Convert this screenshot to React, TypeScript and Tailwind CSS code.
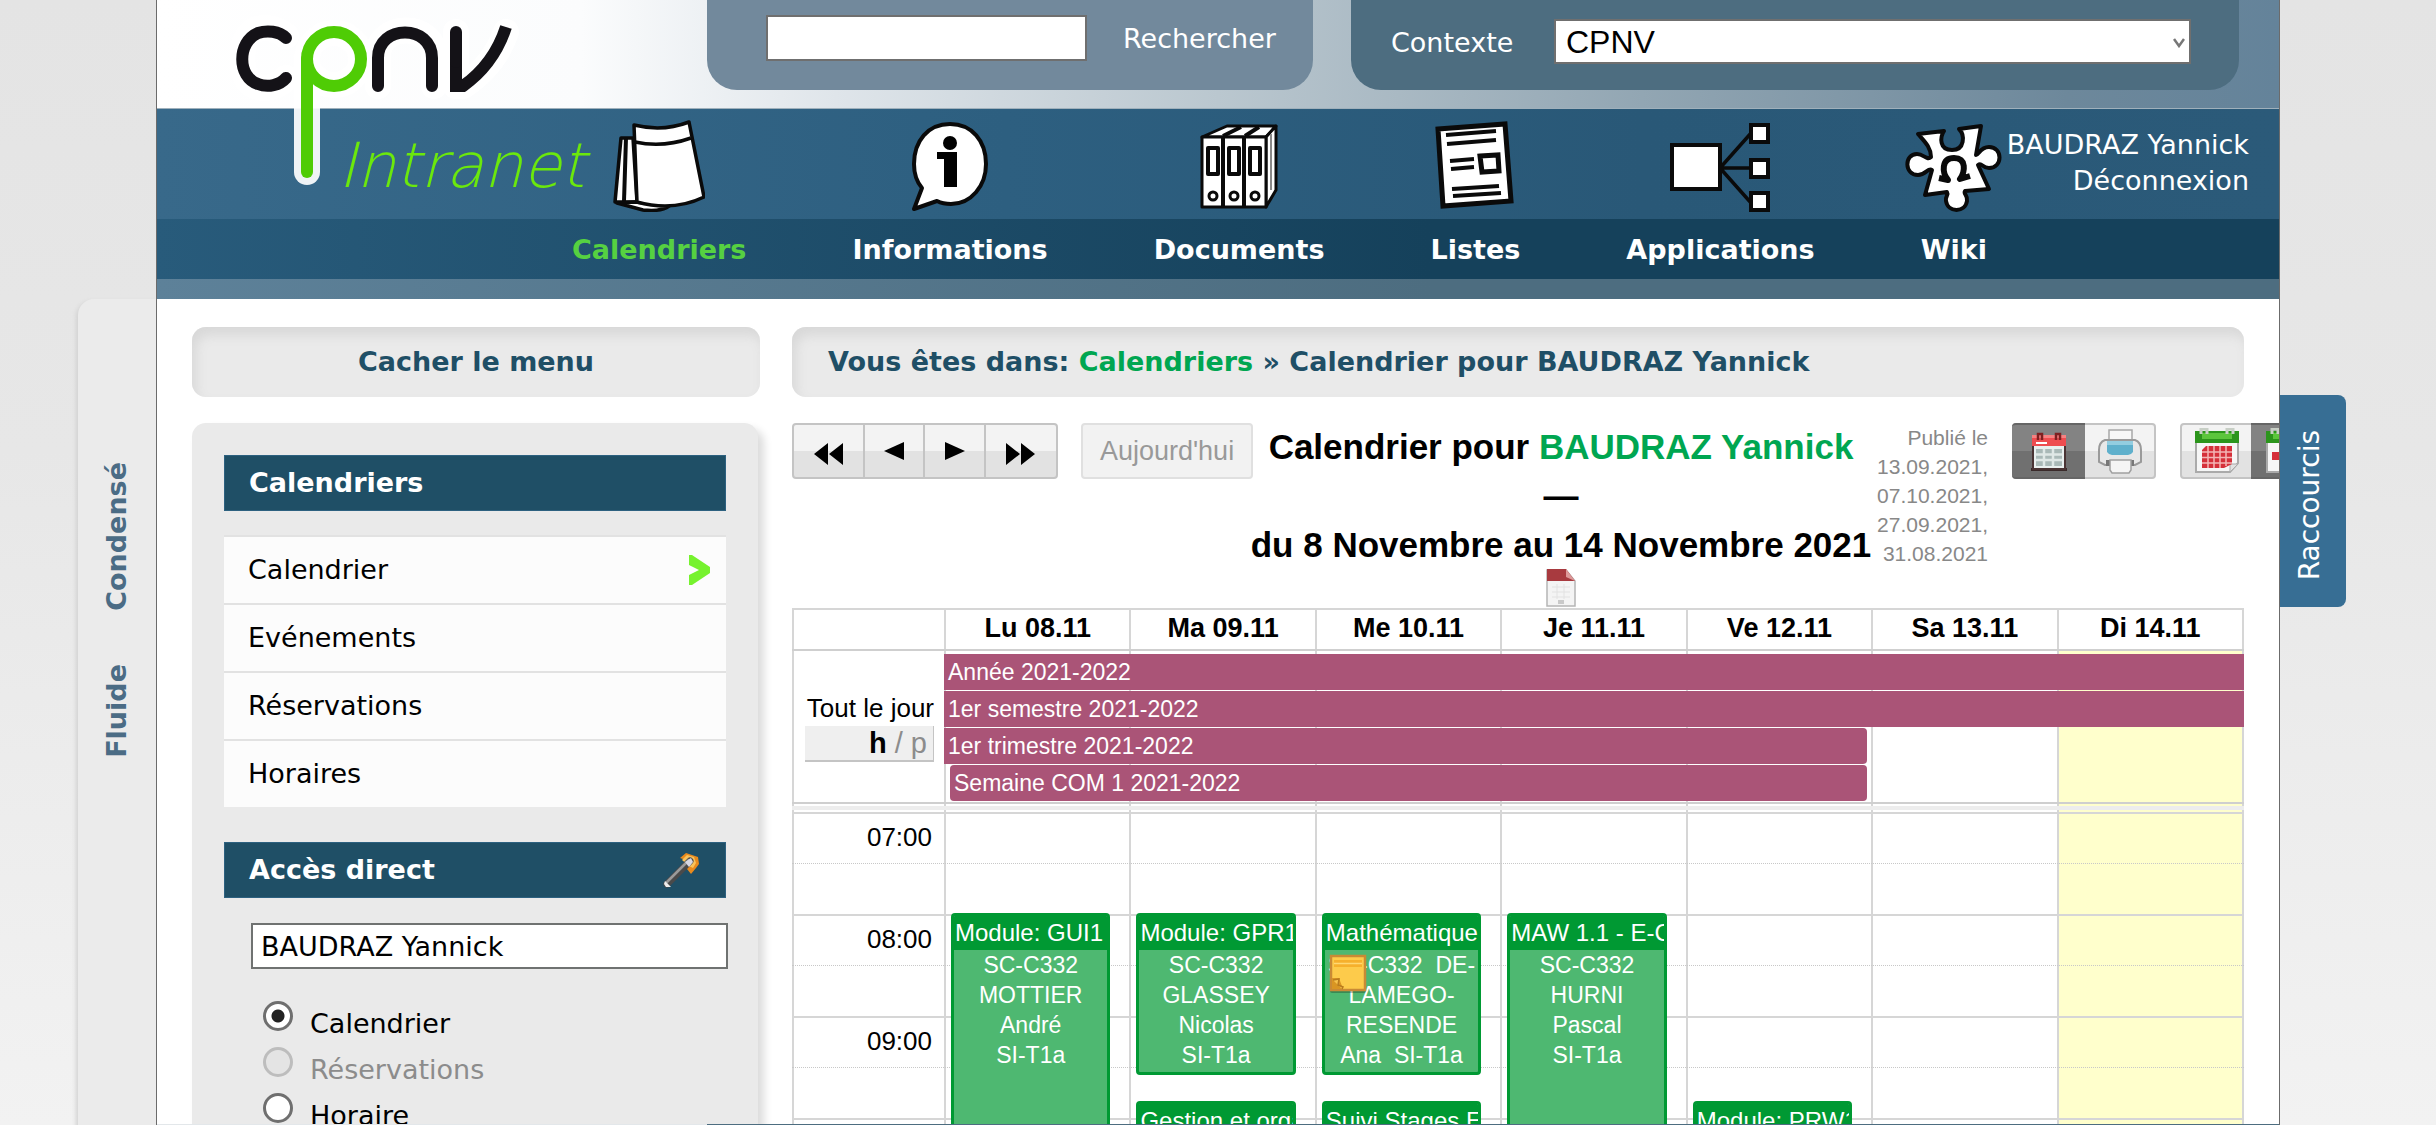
import React from "react";

const navItems = [
  { label: "Calendriers", icon: <CalendarPadIcon />, active: true },
  { label: "Informations", icon: <InfoBubbleIcon /> },
  { label: "Documents", icon: <BindersIcon /> },
  { label: "Listes", icon: <SheetIcon /> },
  { label: "Applications", icon: <TreeIcon /> },
  { label: "Wiki", icon: <PuzzleIcon /> },
];

const menuItems = ["Calendrier", "Evénements", "Réservations", "Horaires"];
const days = ["Lu 08.11", "Ma 09.11", "Me 10.11", "Je 11.11", "Ve 12.11", "Sa 13.11", "Di 14.11"];
const hours = ["07:00", "08:00", "09:00", "10:00"];
const publishedOn = ["Publié le", "13.09.2021,", "07.10.2021,", "27.09.2021,", "31.08.2021"];

type Lesson = { title: string; lines: string[]; height: string; note?: boolean };
const lessons: { offset: string; items: Lesson[] }[] = [
  { offset: "pt-[101px]", items: [{ title: "Module: GUI1", lines: ["SC-C332", "MOTTIER", "André", "SI-T1a"], height: "h-[320px]" }] },
  {
    offset: "pt-[101px]",
    items: [
      { title: "Module: GPR1", lines: ["SC-C332", "GLASSEY", "Nicolas", "SI-T1a"], height: "h-[162px]" },
      { title: "Gestion et organisation", lines: [], height: "h-[162px]" },
    ],
  },
  {
    offset: "pt-[101px]",
    items: [
      { title: "Mathématiques", lines: ["SC-C332\u00a0 DE-", "LAMEGO-", "RESENDE", "Ana\u00a0 SI-T1a"], height: "h-[162px]", note: true },
      { title: "Suivi Stages Entreprise", lines: [], height: "h-[162px]" },
    ],
  },
  { offset: "pt-[101px]", items: [{ title: "MAW 1.1 - E-Commerce", lines: ["SC-C332", "HURNI", "Pascal", "SI-T1a"], height: "h-[320px]" }] },
  { offset: "pt-[289px]", items: [{ title: "Module: PRW1", lines: [], height: "h-[162px]" }] },
  { offset: "", items: [] },
  { offset: "", items: [] },
];

function CalendarPadIcon() {
  return (
    <svg viewBox="0 0 92 92" className="h-[92px] w-[92px]" fill="#fff" stroke="#0a0a0a" strokeWidth="3.5" strokeLinejoin="round">
      <path d="M8 18 L20 18 L24 82 L2 82 Z" />
      <path d="M22 82 L56 86 Q48 92 30 90 L4 83 Z" />
      <path d="M13 18 L11 81" strokeWidth="4" fill="none" />
      <path d="M21 5 Q50 12 76 2 L91 77 Q60 92 24 82 Z" />
      <path d="M22 22 Q50 28 78 18" fill="none" />
    </svg>
  );
}

function InfoBubbleIcon() {
  return (
    <svg viewBox="0 0 80 92" className="h-[92px] w-20">
      <path d="M40 4 C62 4 76 21 76 44 C76 66 61 84 41 84 C36 84 31 83 27 81 L4 89 L12 68 C6 61 4 53 4 44 C4 21 18 4 40 4 Z" fill="#fff" stroke="#0a0a0a" strokeWidth="4" strokeLinejoin="round" />
      <circle cx="40" cy="23" r="7" />
      <path d="M27 32 H47 V67 H34 V39 H27 Z" />
    </svg>
  );
}

function BindersIcon() {
  return (
    <svg viewBox="0 0 80 92" className="h-[92px] w-20" stroke="#0a0a0a" strokeWidth="3" strokeLinejoin="round" fill="#fff">
      <path d="M3 17 L28 6 H77 L67 17 Z" />
      <path d="M67 17 L77 6 V70 L67 87 Z" />
      <path d="M24 16 L42 7 M46 16 L60 7" fill="none" strokeWidth="4" />
      <path d="M72 14 V70" fill="none" strokeWidth="2" stroke="#888" />
      <rect x="3" y="17" width="64" height="70" />
      <path d="M24 17 V87 M45 17 V87" strokeWidth="4" />
      {[9, 30, 51].map((x) => (
        <g key={x}>
          <rect x={x} y="28" width="10" height="26" strokeWidth="4" />
          <circle cx={x + 5} cy="76" r="4" strokeWidth="3" />
        </g>
      ))}
    </svg>
  );
}

function SheetIcon() {
  return (
    <svg viewBox="0 0 80 92" className="h-[92px] w-20" fill="#fff" stroke="#0a0a0a" strokeWidth="4">
      <path d="M3 9 L70 4 L76 81 L8 86 Z" strokeWidth="5" />
      <path d="M11 15 L61 11 M12 24 L61 20 M15 41 L39 39 M16 49 L39 47 M17 69 L64 66 M18 76 L66 73" strokeWidth="4" />
      <path d="M45 36 L63 35 L64 51 L47 52 Z" strokeWidth="5" />
    </svg>
  );
}

function TreeIcon() {
  return (
    <svg viewBox="0 0 104 92" className="h-[92px] w-[104px]" fill="#fff" stroke="#0a0a0a" strokeWidth="4">
      <path d="M52 48 L84 12 M52 48 H84 M52 48 L84 84" fill="none" strokeWidth="3.5" />
      <rect x="4" y="25" width="48" height="44" />
      <rect x="83" y="5" width="17" height="17" />
      <rect x="83" y="40" width="17" height="17" />
      <rect x="83" y="73" width="17" height="17" />
    </svg>
  );
}

function PuzzleIcon() {
  return (
    <svg viewBox="0 0 98 94" className="h-[94px] w-[98px]" fill="#fff" stroke="#0a0a0a" strokeWidth="4" strokeLinejoin="round">
      <path d="M13 15 L39 12 C35 18 34 31 47 31 C60 31 60 16 54 10 L76 7 L71 36 C74 36 75 28 84 28 C98 28 98 49 84 49 C77 49 77 43 73 46 L84 70 L60 72 C58 75 63 76 62 82 C60 94 43 94 41 82 C40 77 44 76 42 73 L20 76 L27 51 C23 48 21 56 13 56 C-1 56 -1 35 12 35 C19 35 22 42 26 38 C26 28 19 22 13 15 Z" />
      <path d="M34 59 L43 61 C37 54 36 39 49 39 C62 39 60 53 55 60 L65 57" fill="none" strokeWidth="6" />
    </svg>
  );
}

function Logo() {
  return (
    <svg viewBox="0 0 400 190" className="h-[190px] w-[400px]" fill="none" strokeLinecap="round" role="img" aria-label="cpnv">
      <g stroke="#fff" strokeWidth="26" strokeLinejoin="round">
        <path d="M56 34 C47 26 34 24 25 28 C8 35 8 78 25 84 C35 88 48 85 56 76" />
        <path d="M77 170 V55" strokeOpacity=".92" />
        <ellipse cx="104" cy="57" rx="27" ry="26" />
        <path d="M148 84 V54 C148 20 204 20 204 54 V84 M226 30 V84 M226 84 H233 Q264 64 276 30" />
      </g>
      <g stroke="#141217" strokeWidth="12">
        <path d="M56 36 C49 29 37 28 28 31 C7 40 7 75 28 82 C38 86 50 83 56 76" />
        <path d="M148 84 V56 C148 22 202 22 202 56 V84" />
        <path d="M226 30 V84 H233 Q264 62 276 25" strokeLinecap="butt" />
        <path d="M226 30 V60" />
      </g>
      <g stroke="#4fcc05" strokeWidth="12">
        <path d="M77 170 V57" />
        <ellipse cx="104" cy="57" rx="27" ry="27" />
      </g>
    </svg>
  );
}

function WandIcon() {
  return (
    <svg viewBox="0 0 38 36" className="h-9 w-[38px]" aria-hidden="true">
      <path d="M17 6 L23 1 L29 3 L35 5 L36 12 L33 16 L28 22 L24 17 L26 9 Z" fill="#e98a1c" />
      <path d="M19 8 L24 3 L31 5 L33 11 L30 16 L26 14 Z" fill="#f8c25a" />
      <path d="M4 32 L27 9" stroke="#4a4a4a" strokeWidth="7" strokeLinecap="round" />
      <path d="M3 31 L26 8" stroke="#9a9a9a" strokeWidth="2.5" strokeLinecap="round" />
      <path d="M22 10 L28 6 L30 10 L26 15 Z" fill="#d8d8e2" />
      <path d="M2 29 L8 35 L3 35 L1 32 Z" fill="#eee" />
    </svg>
  );
}

function NoteIcon() {
  return (
    <svg viewBox="0 0 38 40" className="h-10 w-[38px]" aria-hidden="true">
      <rect x="1" y="3" width="36" height="36" rx="2" fill="#00000040" />
      <path d="M2 2 H36 V36 H2 Z" fill="#fdcb4b" stroke="#c98a35" strokeWidth="2.5" />
      <path d="M5 6 H33 V13 H5 Z" fill="#f6b02c" />
      <path d="M5 9.5 H33" stroke="#ffd873" strokeWidth="1.5" />
      <path d="M3 24 H10 L14 35 H3 Z" fill="#d99523" />
      <path d="M4 26 L10 25 L9 31 L14 33 L13 35" fill="#f5c14c" stroke="#b97b1e" strokeWidth="1.5" />
    </svg>
  );
}

function RedCalendarIcon() {
  return (
    <svg viewBox="0 0 38 42" className="h-[42px] w-[38px]" aria-hidden="true">
      <path d="M1 38 H37 V41 H1 Z" fill="#3a2a2a" />
      <path d="M3 14 H35 V39 H3 Z" fill="#e9f0ef" stroke="#4a3434" strokeWidth="2" />
      <path d="M2 5 H36 V16 H2 Z" fill="#ee4d50" />
      <path d="M2 5 H36 V8 H2 Z" fill="#f68181" />
      <path d="M6 13 H17" stroke="#fff" strokeWidth="2" />
      <path d="M8 10 V4 H12 V10 M26 10 V4 H30 V10" fill="none" stroke="#7e2020" strokeWidth="2.5" />
      <path d="M6 19 H32 V36 H6 Z" fill="#a9b9b7" />
      <path d="M14 19 V36 M23 19 V36 M6 24.500 H32 M6 30 H32" stroke="#dfe8e6" strokeWidth="2.500" />
    </svg>
  );
}

function PrinterIcon() {
  return (
    <svg viewBox="0 0 46 46" className="h-[46px] w-[46px]" aria-hidden="true">
      <path d="M12 2 H35 V16 H12 Z" fill="#f7f7f7" stroke="#a8a8a8" strokeWidth="1.500" />
      <path d="M8 12 Q2 14 2 22 V34 L8 37 H38 L44 34 V22 Q44 14 38 12 Z" fill="#e8e8e8" stroke="#9a9a9a" strokeWidth="2" />
      <path d="M10 13 H36 V24 Q34 27 31 27 H15 Q12 27 10 24 Z" fill="#5fb0cc" />
      <path d="M10 13 H36 V17 H10 Z" fill="#93cde0" />
      <path d="M9 32 H37 V38 H9 Z" fill="#777" />
      <path d="M13 32 H34 V42 L32 45 H15 L13 42 Z" fill="#f5f5f5" stroke="#a0a0a0" strokeWidth="1.500" />
    </svg>
  );
}

function GreenCalendarIcon({ dense }: { dense?: boolean }) {
  return (
    <svg viewBox="0 0 46 46" className="h-[46px] w-[46px] shrink-0" aria-hidden="true">
      <path d="M2 14 H44 V35 L36 44 H2 Z" fill="#f6f6f6" stroke="#aaa" strokeWidth="2" />
      <path d="M36 44 V36 H44 Z" fill="#e2e2e2" stroke="#aaa" />
      <path d="M1 3 H45 V15 H1 Z" fill="#2c951c" />
      <path d="M8 5 H38 V11 H8 Z" fill="#5cc53c" />
      <path d="M7 6 V1 H13 V6 M33 6 V1 H39 V6" fill="none" stroke="#c8cfc6" strokeWidth="3" />
      {dense ? (
        <>
          <path d="M12 18 H38 V36 L30 40 H8 V22 Z" fill="#d5303a" />
          <path d="M14 18 V40 M20 18 V40 M26 18 V40 M32 18 V38 M8 24 H38 M8 29.500 H38 M8 35 H38" stroke="#f3b5b5" strokeWidth="1.500" />
        </>
      ) : (
        <path d="M7 24 H39 V32 H7 Z" fill="#d5303a" />
      )}
    </svg>
  );
}

function SmallPageIcon() {
  return (
    <svg viewBox="0 0 30 38" className="h-[38px] w-[30px]" aria-hidden="true">
      <path d="M1 1 H20 L29 12 V37 H1 Z" fill="#f4f4f4" stroke="#b5b5b5" strokeWidth="1.500" />
      <path d="M1 0 H20 L29 12 H1 Z" fill="#a83a3f" />
      <path d="M20 0 V8 L29 12 Z" fill="#d99" />
      <path d="M6 18 H24 M6 23 H24 M6 28 H24 M11 15 V30 M18 15 V30" stroke="#e2e2e2" />
      <path d="M12 31 H18 V35 H12 Z" fill="#c9c9c9" />
    </svg>
  );
}

function Header() {
  return (
    <header className="relative">
      <div className="flex h-[109px] items-start gap-[38px] border-b border-[#9fb0bb] bg-[linear-gradient(to_right,#ffffff_0%,#fbfcfd_20%,#dfe5ea_32%,#bac7cf_50%,#92a6b3_70%,#6d889b_90%,#64839a_100%)] pr-10 pl-[550px]">
        <form className="flex h-[90px] w-[606px] shrink-0 items-start rounded-b-[30px] bg-[#72899c] pt-[15px] pl-[59px]">
          <input aria-label="Rechercher" className="h-[46px] w-[321px] border-2 border-[#6f6f6f] bg-white px-2 text-[27px]" />
          <button type="button" className="ml-9 h-12 text-[27px] leading-[48px] text-white">Rechercher</button>
        </form>
        <form className="flex h-[90px] flex-1 items-start rounded-b-[30px] bg-[#4d6d80] pt-[19px] pr-12 pl-10">
          <label htmlFor="contexte" className="w-[163px] text-[27px] leading-[48px] text-white">Contexte</label>
          <div className="relative flex-1">
            <select id="contexte" className="h-[45px] w-full appearance-none border-2 border-[#6f6f6f] bg-white pl-[10px] font-['Liberation_Sans',sans-serif] text-[32px] leading-[40px] text-black">
              <option>CPNV</option>
            </select>
            <svg viewBox="0 0 12 10" className="pointer-events-none absolute top-[19px] right-1.5 h-[10px] w-3" fill="none" stroke="#777" strokeWidth="2.500">
              <path d="M1 1 L6 8 L11 1" />
            </svg>
          </div>
        </form>
      </div>
      <nav className="flex h-[170px] items-start bg-[linear-gradient(to_right,#38698a,#2d5f80_40%,#295877_70%,#2b5a79),linear-gradient(to_right,#285b7b,#15415b_60%,#15415b)] bg-[length:100%_110px,100%_60px] bg-[position:0_0,0_110px] bg-no-repeat pr-[30px] pl-[415px]">
        <ul className="flex gap-[106px]">
          {navItems.map((item) => (
            <li key={item.label}>
              <a href="#" className={item.active ? "flex flex-col items-center text-[#56d141]" : "flex flex-col items-center text-white"}>
                <span className="-mx-6 flex h-[110px] items-center pt-1">{item.icon}</span>
                <span className="text-[27px] leading-[62px] font-bold">{item.label}</span>
              </a>
            </li>
          ))}
        </ul>
        <div className="ml-auto flex flex-col items-end pt-[18px] text-[27px] leading-9 whitespace-nowrap text-white">
          <a href="#">BAUDRAZ Yannick</a>
          <a href="#">Déconnexion</a>
        </div>
      </nav>
      <div className="h-5 bg-[linear-gradient(to_right,#5d8199,#4d6d80_60%)]" />
      <a href="#" className="absolute top-0.5 left-[73px] block h-[190px]">
        <Logo />
        <span className="absolute top-[132px] left-[108px] font-['DejaVu_Sans_Light','DejaVu_Sans',sans-serif] text-[62px] leading-[64px] font-extralight text-[#6be80c] italic">Intranet</span>
      </a>
    </header>
  );
}

function Sidebar() {
  return (
    <aside className="flex flex-col gap-[26px]">
      <button type="button" className="h-[70px] rounded-[14px] bg-[#eaeaea] text-[27px] font-bold text-[#1f4f66] shadow-[inset_4px_8px_12px_#d8d8d8]">Cacher le menu</button>
      <div className="mr-0.5 h-[900px] rounded-[14px] bg-[#eaeaea] px-8 pt-8 shadow-[6px_6px_8px_#dcdcdc]">
        <h2 className="h-14 border border-[#2d6180] bg-[#1f4f66] pl-6 text-[27px] leading-[54px] font-bold text-white">Calendriers</h2>
        <ul className="mt-6 bg-[#fcfcfc] text-[27px] text-black">
          {menuItems.map((item, i) => (
            <li key={item}>
              <a href="#" className="flex h-[68px] items-center justify-between border-t-2 border-[#e2e2e2] pr-4 pl-6">
                {item}
                {i === 0 && (
                  <svg viewBox="0 0 22 30" className="h-[30px] w-[22px]" fill="#76f22e">
                    <path d="M1 0 H4 L22 12 V18 L4 30 H1 V20 L11 15 L1 10 Z" />
                  </svg>
                )}
              </a>
            </li>
          ))}
        </ul>
        <h2 className="mt-[35px] flex h-14 items-center justify-between border border-[#2d6180] bg-[#1f4f66] pr-6 pl-6 text-[27px] font-bold text-white">
          Accès direct
          <WandIcon />
        </h2>
        <input aria-label="Accès direct" defaultValue="BAUDRAZ Yannick" className="mt-[25px] ml-[27px] h-[46px] w-[477px] border-2 border-[#6f7271] bg-white pl-2 text-[27px] text-black" />
        <fieldset className="mt-[26px] ml-[39px] text-[27px]">
          {["Calendrier", "Réservations", "Horaire"].map((label, i) => (
            <label key={label} className={i === 1 ? "flex h-[46px] items-start gap-[17px] text-[#8c8c8c]" : "flex h-[46px] items-start gap-[17px] text-black"}>
              <input
                type="radio"
                name="acces"
                defaultChecked={i === 0}
                disabled={i === 1}
                className="mt-1.5 h-[30px] w-[30px] appearance-none rounded-full border-[3px] border-[#6f6f6f] bg-white checked:bg-[radial-gradient(circle,#222_0_6px,#fff_7px)] disabled:border-[#bdbdbd] disabled:bg-[#e4e4e4]"
              />
              <span className="pt-2.5 leading-[38px]">{label}</span>
            </label>
          ))}
        </fieldset>
      </div>
    </aside>
  );
}

function Toolbar() {
  const face = "bg-[linear-gradient(#f3f3f3_50%,#e2e2e2_50%)]";
  return (
    <div className="flex h-[185px] items-start font-['Liberation_Sans',sans-serif]">
      <div className={`flex h-14 w-[266px] shrink-0 rounded border-2 border-[#c4c4c4] text-black ${face}`}>
        <button type="button" aria-label="Année précédente" className="flex w-[71px] items-center justify-center border-r-2 border-[#c4c4c4] pt-1.5">
          <svg viewBox="0 0 30 22" className="h-[22px] w-[30px]"><path d="M14 0 V22 L0 11 Z M29 0 V22 L15 11 Z" /></svg>
        </button>
        <button type="button" aria-label="Semaine précédente" className="flex w-[60px] items-center justify-center border-r-2 border-[#c4c4c4]">
          <svg viewBox="0 0 20 18" className="h-[18px] w-5"><path d="M20 0 V18 L0 9 Z" /></svg>
        </button>
        <button type="button" aria-label="Semaine suivante" className="flex w-[61px] items-center justify-center border-r-2 border-[#c4c4c4]">
          <svg viewBox="0 0 20 18" className="h-[18px] w-5"><path d="M0 0 V18 L20 9 Z" /></svg>
        </button>
        <button type="button" aria-label="Année suivante" className="flex flex-1 items-center justify-center pt-1.5">
          <svg viewBox="0 0 30 22" className="h-[22px] w-[30px]"><path d="M0 0 V22 L14 11 Z M15 0 V22 L29 11 Z" /></svg>
        </button>
      </div>
      <button type="button" disabled className="ml-[23px] h-14 w-[172px] shrink-0 rounded border-2 border-[#e0e0e0] bg-[#f2f2f2] text-[27px] text-[#999]">Aujourd'hui</button>
      <div className="-mt-px flex w-[616px] shrink-0 flex-col items-center text-[35px] leading-[49px] font-bold whitespace-nowrap text-black">
        <h1>Calendrier pour <a href="#" className="text-[#00a651]">BAUDRAZ Yannick</a></h1>
        <span>—</span>
        <span>du 8 Novembre au 14 Novembre 2021</span>
        <SmallPageIcon />
      </div>
      <div className="ml-1.5 w-[113px] shrink-0 text-right text-[21px] leading-[29px] text-[#888]">
        {publishedOn.map((line) => (
          <div key={line}>{line}</div>
        ))}
      </div>
      <div className={`ml-6 flex h-14 shrink-0 rounded border-2 border-[#c4c4c4] ${face}`}>
        <button type="button" aria-label="Vue calendrier" className="-my-0.5 -ml-0.5 flex w-[73px] items-center justify-center rounded-l border-y-2 border-[#666] bg-[linear-gradient(#838383_50%,#707070_50%)]"><RedCalendarIcon /></button>
        <button type="button" aria-label="Imprimer" className="flex w-[69px] items-center justify-center"><PrinterIcon /></button>
      </div>
      <div className={`ml-6 flex h-14 shrink-0 rounded border-2 border-[#c4c4c4] ${face}`}>
        <button type="button" aria-label="Vue mois" className="flex w-[69px] items-center justify-center"><GreenCalendarIcon dense /></button>
        <button type="button" aria-label="Vue semaine" className="-my-0.5 flex w-[73px] items-center justify-center border-y-2 border-[#666] bg-[linear-gradient(#838383_50%,#707070_50%)]"><GreenCalendarIcon /></button>
      </div>
    </div>
  );
}

function DayColumns() {
  return (
    <div className="absolute inset-0 grid grid-cols-[152px_repeat(7,1fr)] pr-0.5">
      <div className="border-l-2 border-[#d6d6d6]" />
      {days.map((day) => (
        <div key={day} className="border-l-2 border-[#d6d6d6] last:-mr-0.5 last:border-r-2 last:bg-[#ffffcc]" />
      ))}
    </div>
  );
}

function LessonCard({ lesson }: { lesson: Lesson }) {
  return (
    <article className={`relative shrink-0 overflow-hidden rounded border-[3px] border-[#009933] bg-[#4eb871] text-white ${lesson.height}`}>
      <h3 className="h-[34px] overflow-hidden bg-[#009933] pl-px text-[24px] leading-[33px] whitespace-nowrap">{lesson.title}</h3>
      <div className="text-center text-[23px] leading-[30px] whitespace-nowrap">
        {lesson.lines.map((line) => (
          <p key={line}>{line}</p>
        ))}
      </div>
      {lesson.note && (
        <span className="absolute top-[38px] left-1">
          <NoteIcon />
        </span>
      )}
    </article>
  );
}

function WeekCalendar() {
  return (
    <section className="border-t-2 border-[#d6d6d6] font-['Liberation_Sans',sans-serif] text-black">
      <div className="grid h-[39px] grid-cols-[152px_repeat(7,1fr)] pr-0.5">
        <div className="border-l-2 border-[#d6d6d6]" />
        {days.map((day) => (
          <div key={day} className="border-l-2 border-[#d6d6d6] text-center text-[27px] leading-9 font-bold last:-mr-0.5 last:border-r-2">{day}</div>
        ))}
      </div>
      <div className="relative h-[155px] border-y-2 border-[#cfcfcf]">
        <DayColumns />
        <div className="relative grid grid-cols-[152px_1fr]">
          <div className="flex h-[150px] flex-col items-stretch justify-center pr-2.5 pl-[13px] text-right text-[26px]">
            <span className="leading-9 whitespace-nowrap">Tout le jour</span>
            <button type="button" className="h-9 border-r border-b-2 border-[#c4c4c4] bg-[#efefef] pr-1.5 text-right text-[29px] leading-8 whitespace-pre">
              <b>h</b> <span className="text-[#8c8c8c]">/ p</span>
            </button>
          </div>
          <div className="grid grid-cols-7 content-start gap-y-px pt-[3px] text-[23px] leading-9 text-white">
            <a href="#" className="col-span-7 h-9 bg-[#aa5477] pl-1">Année 2021-2022</a>
            <a href="#" className="col-span-7 h-9 bg-[#aa5477] pl-1">1er semestre 2021-2022</a>
            <a href="#" className="col-span-5 mr-1.5 h-9 rounded-r bg-[#aa5477] pl-1">1er trimestre 2021-2022</a>
            <a href="#" className="col-span-5 col-start-1 mr-1.5 ml-1.5 h-9 rounded bg-[#aa5477] pl-1">Semaine COM 1 2021-2022</a>
          </div>
        </div>
      </div>
      <div className="relative h-2 pt-0.5">
        <DayColumns />
        <div className="relative h-1 bg-[#ededed]" />
      </div>
      <div className="relative">
        <DayColumns />
        <div className="relative">
          {hours.map((hour) => (
            <div key={hour} className="h-[102px] border-t-2 border-[#d6d6d6]">
              <div className="h-[50px] w-full border-b border-dotted border-[#c8c8c8] text-[26px] leading-[46px]">
                <span className="block w-[140px] text-right">{hour}</span>
              </div>
            </div>
          ))}
        </div>
        <div className="absolute inset-x-0 top-0 grid grid-cols-[152px_repeat(7,1fr)] pr-0.5">
          <span />
          {lessons.map((column, i) => (
            <div key={days[i]} className={`flex min-w-0 flex-col gap-[26px] pr-[19px] pl-[7px] ${column.offset}`}>
              {column.items.map((lesson) => (
                <LessonCard key={lesson.title} lesson={lesson} />
              ))}
            </div>
          ))}
        </div>
      </div>
    </section>
  );
}

export default function App() {
  return (
    <div className="flex h-screen overflow-hidden bg-[linear-gradient(#e4e4e4,#e7e7e7_40%,#f2f2f2)] font-['DejaVu_Sans',sans-serif]">
      <div className="flex w-[156px] shrink-0 justify-end pt-[299px]">
        <div className="flex h-[900px] w-[78px] flex-col items-center gap-[53px] rounded-tl-[16px] bg-[#ebebeb] pt-[163px] text-[27px] leading-8 font-bold text-[#4b6c85] shadow-[-2px_2px_4px_#d2d2d2]">
          <a href="#" className="rotate-180 [writing-mode:vertical-rl]">Condensé</a>
          <a href="#" className="rotate-180 [writing-mode:vertical-rl]">Fluide</a>
        </div>
      </div>
      <div className="min-w-0 flex-1 overflow-hidden border-x border-[#6b6b6b] bg-white">
        <Header />
        <main className="grid grid-cols-[568px_minmax(0,1fr)] items-start gap-8 px-[35px] pt-7">
          <Sidebar />
          <div className="flex flex-col gap-[26px]">
            <div className="flex h-[70px] items-center rounded-[14px] bg-[#eaeaea] pl-9 text-[27px] font-bold whitespace-pre text-[#1f4f66] shadow-[inset_4px_8px_12px_#d8d8d8]">
              Vous êtes dans: <a href="#" className="text-[#00a651]">Calendriers</a> » Calendrier pour BAUDRAZ Yannick
            </div>
            <div>
              <Toolbar />
              <WeekCalendar />
            </div>
          </div>
        </main>
      </div>
      <div className="w-[156px] shrink-0 pt-[395px]">
        <button type="button" className="flex h-[212px] w-[66px] items-center justify-center rounded-r-[8px] bg-[#376e94] pt-2 pr-1.5 text-[28px] text-white">
          <span className="rotate-180 [writing-mode:vertical-rl]">Raccourcis</span>
        </button>
      </div>
      <div className="fixed inset-x-[157px] bottom-0 h-px bg-[linear-gradient(to_right,#e3e7ea_550px,#4d6d80_550px)]" />
    </div>
  );
}
